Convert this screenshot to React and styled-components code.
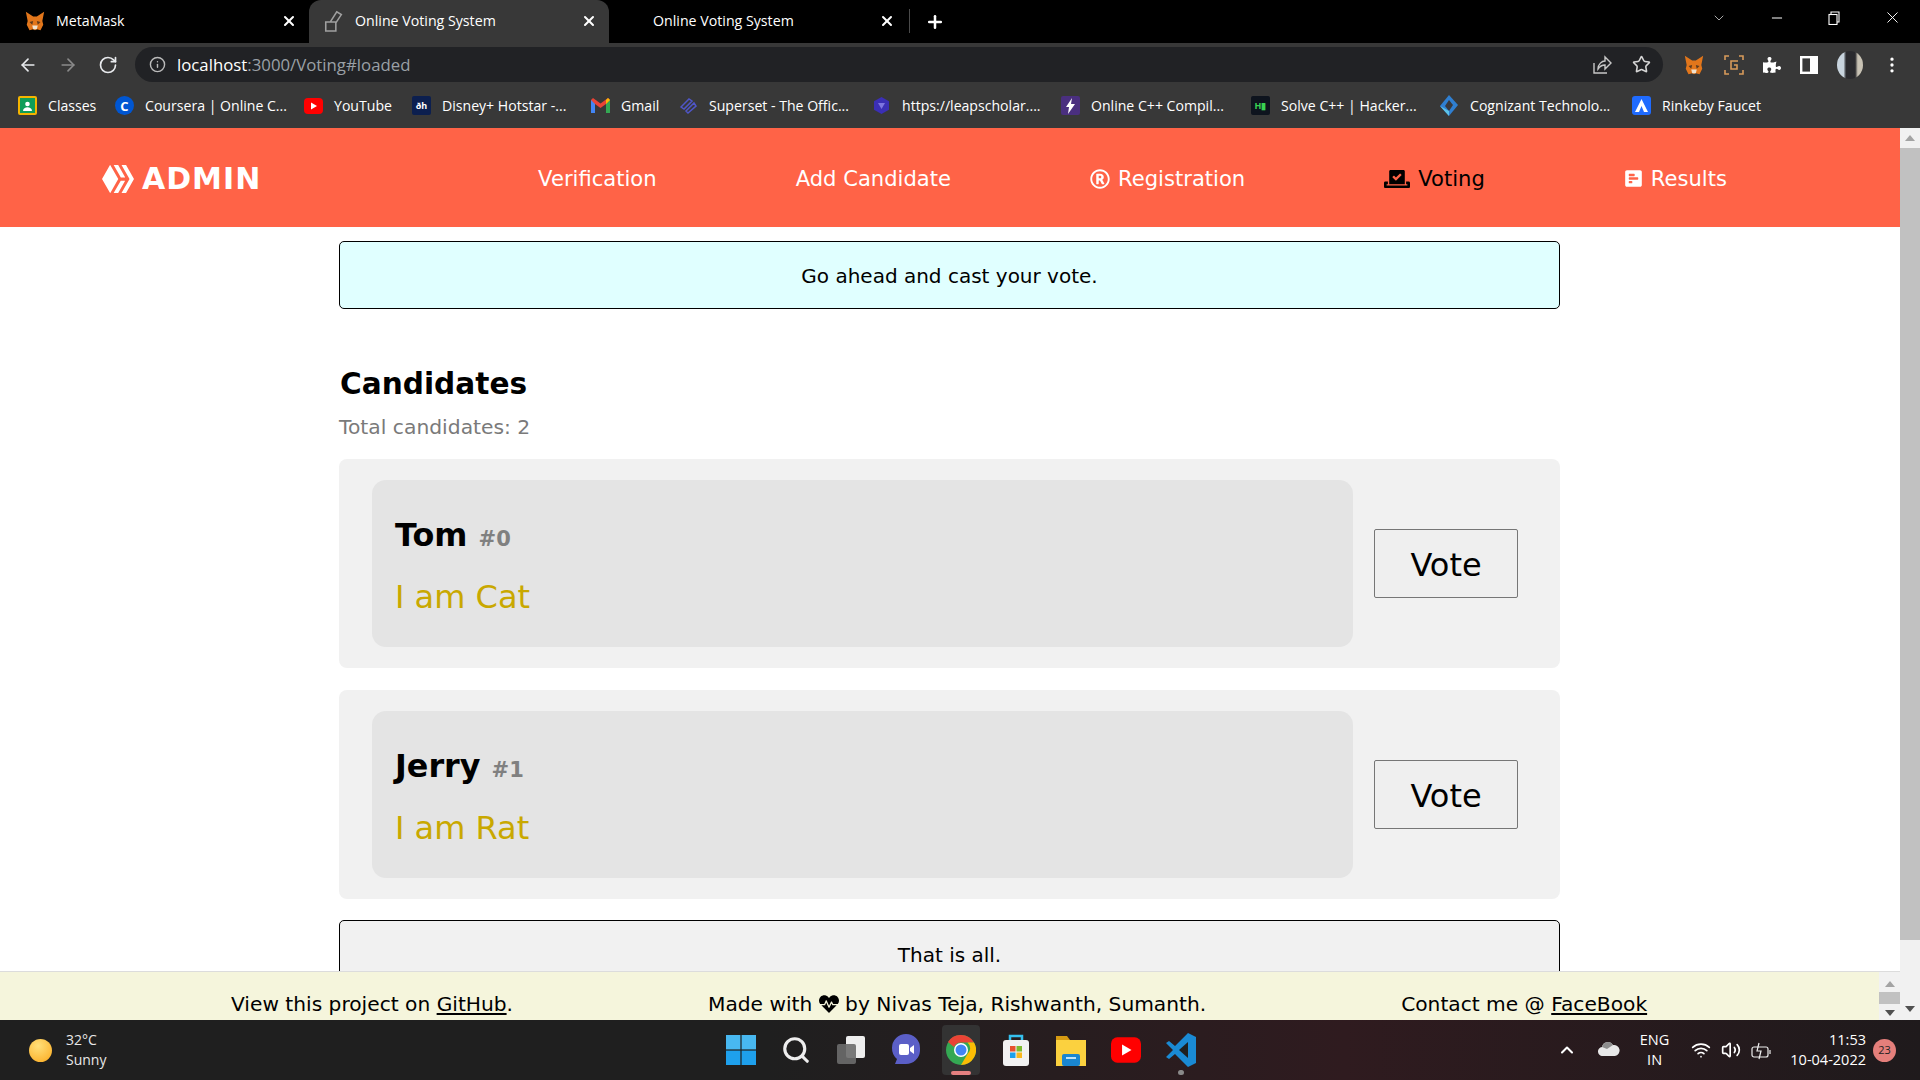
import React from "react"
import styled, { createGlobalStyle } from "styled-components"
import { FaHive, FaRegRegistered, FaVoteYea, FaPollH, FaHeartbeat, FaPuzzlePiece } from "react-icons/fa"
import { ArrowLeft, ArrowRight, RotateCw, Info, Star, X, Plus, Minus, ChevronDown, ChevronUp, EllipsisVertical, Wifi, Volume2, Search } from "lucide-react"

const UI_FONT = `"Open Sans", "Noto Sans", sans-serif`
const PAGE_FONT = `"DejaVu Sans", Verdana, sans-serif`

const GlobalStyle = createGlobalStyle`
  html, body { margin: 0; height: 100%; overflow: hidden; background: #fff; }
  #root { height: 100%; }
  * { box-sizing: border-box; }
`

const Screen = styled.div`
  display: flex;
  flex-direction: column;
  height: 1080px;
  width: 1920px;
  overflow: hidden;
`

/* browser chrome */
const TabStrip = styled.div`
  display: flex;
  height: 43px;
  background: #000;
  color: #fff;
  font: 14.2px ${UI_FONT};
`
const Tab = styled.div`
  display: flex;
  align-items: center;
  gap: ${(p) => (p.$noIcon ? "0" : "10px")};
  width: ${(p) => p.$w}px;
  padding: 0 12px 2px ${(p) => p.$pad}px;
  background: ${(p) => (p.$active ? "#383838" : "transparent")};
  border-radius: ${(p) => (p.$active ? "12px 12px 0 0" : "0")};
`
const TabTitle = styled.span`
  flex: 1;
  white-space: nowrap;
`
const TabDivider = styled.div`
  width: 1px;
  height: 24px;
  margin: 9px 15px 0 2px;
  background: #4a4a4a;
`
const NewTab = styled.div`
  display: flex;
  align-items: center;
`
const WindowControls = styled.div`
  display: flex;
  align-items: center;
  gap: 42px;
  margin-left: auto;
  padding: 0 18px 8px 0;
`
const Toolbar = styled.div`
  display: flex;
  align-items: center;
  height: 42px;
  padding: 1px 18px 0 18px;
  background: #383838;
  color: #e8eaed;
`
const NavButtons = styled.div`
  display: flex;
  gap: 20px;
  width: 117px;
`
const Omnibox = styled.div`
  display: flex;
  align-items: center;
  flex: 1;
  height: 35px;
  padding: 0 12px 0 14px;
  border-radius: 18px;
  background: #212225;
  font: 16.8px ${UI_FONT};
`
const Url = styled.span`
  margin-left: 11px;
  flex: 1;
  color: #fff;
  span { color: #9aa0a6; }
`
const OmniActions = styled.div`
  display: flex;
  align-items: center;
  gap: 20px;
  color: #d6d6d6;
`
const Extensions = styled.div`
  display: flex;
  align-items: center;
  gap: 19px;
  margin-left: 20px;
`
const Avatar = styled.div`
  width: 26px;
  height: 28px;
  border-radius: 50%;
  background: linear-gradient(90deg, #c8d4de 0 25%, #2a2a2e 35% 70%, #c8c2b4 80%);
`
const BookmarkBar = styled.div`
  display: flex;
  align-items: center;
  height: 43px;
  padding: 0 0 2px 18px;
  background: #383838;
  color: #fff;
  font: 14.1px ${UI_FONT};
`
const Bookmark = styled.div`
  display: flex;
  align-items: center;
  gap: 11px;
  width: ${(p) => p.$w}px;
  white-space: nowrap;
`
const FaviconBox = styled.div`
  display: flex;
  align-items: center;
  justify-content: center;
  width: 19px;
  height: 19px;
  border-radius: ${(p) => p.$r || 2}px;
  background: ${(p) => p.$bg || "transparent"};
  color: ${(p) => p.$fg || "#fff"};
  font: 700 ${(p) => p.$size || 9}px ${UI_FONT};
`

/* page */
const Viewport = styled.div`
  display: flex;
  flex: 1;
  min-height: 0;
`
const PageColumn = styled.div`
  display: flex;
  flex-direction: column;
  flex: 1;
  min-width: 0;
`
const Navbar = styled.nav`
  display: flex;
  align-items: center;
  flex-shrink: 0;
  height: 99px;
  padding: 2px 173px 0 102px;
  background: #ff6347;
  color: #fff;
  font: 21.1px ${PAGE_FONT};
`
const Brand = styled.div`
  display: flex;
  align-items: center;
  gap: 8px;
  font: 700 30px ${PAGE_FONT};
  letter-spacing: 1px;
`
const NavList = styled.div`
  display: flex;
  gap: 139px;
  margin-left: auto;
`
const NavItem = styled.div`
  display: flex;
  align-items: center;
  gap: 8px;
  color: ${(p) => (p.$active ? "#000" : "#fff")};
`
const Main = styled.main`
  flex: 1;
  min-height: 0;
  overflow: hidden;
  padding-right: 1px;
`
const Container = styled.div`
  width: 1221px;
  margin: 0 auto;
  padding-top: 14px;
  font-family: ${PAGE_FONT};
`
const Attention = styled.div`
  height: 68px;
  margin-top: ${(p) => (p.$end ? "-1px" : "0")};
  padding-top: 22px;
  border: 1px solid #000;
  border-radius: 5px;
  background: ${(p) => (p.$end ? "#f1f1f1" : "#e0ffff")};
  text-align: center;
  font-size: 20px;
  line-height: 24px;
`
const Heading = styled.h2`
  margin: 57px 0 0 1px;
  font-size: 29.6px;
  line-height: 36px;
  font-weight: 700;
`
const Total = styled.div`
  margin: 13px 0 20px;
  color: #7a7a7a;
  font-size: 20.3px;
  line-height: 24px;
`
const Card = styled.div`
  display: flex;
  align-items: center;
  height: 209px;
  margin-bottom: 22px;
  padding-left: 33px;
  border-radius: 8px;
  background: #f1f1f1;
`
const CardInfo = styled.div`
  width: 981px;
  height: 167px;
  padding: 33px 23px 0;
  border-radius: 14px;
  background: #e4e4e4;
`
const Name = styled.h3`
  margin: 0;
  font-size: 31.8px;
  line-height: 44px;
  font-weight: 700;
`
const CandidateId = styled.small`
  color: #808080;
  font-size: 21px;
`
const Slogan = styled.div`
  margin-top: 16px;
  color: #c9a800;
  font-size: 32px;
  line-height: 40px;
`
const VoteButton = styled.button`
  width: 144px;
  height: 69px;
  margin-left: 21px;
  padding-top: 3px;
  border: 1px solid #767676;
  border-radius: 2px;
  background: #efefef;
  color: #000;
  font: 32px ${PAGE_FONT};
`
const Footer = styled.footer`
  display: flex;
  align-items: flex-end;
  gap: 195px;
  flex-shrink: 0;
  height: 49px;
  padding: 0 0 3px 231px;
  border-top: 1px solid #dcdcdc;
  background: #f5f5dc;
  color: #000;
  font: 20.2px/26px ${PAGE_FONT};
  position: relative;
  a { color: inherit; }
`
const FooterBar = styled.div`
  position: absolute;
  top: 0;
  right: 0;
  bottom: 0;
  width: 21px;
  display: flex;
  flex-direction: column;
  align-items: center;
  background: #f1f1f1;
`
const ScrollTrack = styled.div`
  display: flex;
  flex-direction: column;
  align-items: center;
  flex-shrink: 0;
  width: 20px;
  padding-top: 7px;
  background: #f1f1f1;
`
const Arrow = styled.div`
  width: 0;
  height: 0;
  margin: ${(p) => p.$m};
  border-left: 5px solid transparent;
  border-right: 5px solid transparent;
  ${(p) => (p.$down ? "border-top: 6px solid #505050;" : "border-bottom: 6px solid #a3a3a3;")}
`
const Thumb = styled.div`
  width: 100%;
  height: ${(p) => p.$h}px;
  background: #c1c1c1;
`

/* taskbar */
const Taskbar = styled.div`
  display: flex;
  align-items: center;
  flex-shrink: 0;
  height: 60px;
  background: linear-gradient(90deg, #1f1f1f 0%, #1f1f1f 40%, #2f1b1f 70%, #1f1a1c 100%);
  color: #fff;
  font: 14.5px/20px ${UI_FONT};
`
const Weather = styled.div`
  display: flex;
  align-items: center;
  gap: 14px;
  width: 722px;
  padding-left: 29px;
  color: #e8e8e8;
  font-size: 14px;
`
const Sun = styled.div`
  width: 23px;
  height: 23px;
  border-radius: 50%;
  background: radial-gradient(circle at 40% 30%, #ffe07a, #fba91d);
`
const Dock = styled.div`
  display: flex;
  align-items: center;
  gap: 17px;
`
const DockItem = styled.div`
  position: relative;
  display: flex;
  align-items: center;
  justify-content: center;
  width: 38px;
  height: 50px;
  border-radius: 4px;
  background: ${(p) => (p.$open ? "#333" : "transparent")};
`
const DockMark = styled.span`
  position: absolute;
  bottom: 0;
  width: ${(p) => (p.$active ? "20px" : "6px")};
  height: ${(p) => (p.$active ? "4px" : "5px")};
  border-radius: 3px;
  background: ${(p) => (p.$active ? "#e58080" : "#8a8a8a")};
`
const Tray = styled.div`
  display: flex;
  align-items: center;
  margin-left: auto;
  padding-right: 24px;
`
const TrayText = styled.div`
  margin: ${(p) => p.$m};
  text-align: ${(p) => p.$align || "center"};
`
const Badge = styled.div`
  display: flex;
  align-items: center;
  justify-content: center;
  width: 23px;
  height: 23px;
  margin-left: 7px;
  border-radius: 50%;
  background: #e57f7b;
  color: #222;
  font-size: 11px;
`

const Fox = ({ size = 22 }) => (
  <svg width={size} height={size} viewBox="0 0 24 24">
    <path d="M2 2l8 5h4l8-5-2 10 1 4-3 6-4-1-2 1-2-1-4 1-3-6 1-4z" fill="#e2761b" />
    <path d="M6 13l4-1-1 4zM18 13l-4-1 1 4z" fill="#5c3a1e" />
    <path d="M9 17h6l-1 4h-4z" fill="#f1e3d0" />
  </svg>
)
const Booth = () => (
  <svg width="22" height="24" viewBox="0 0 24 26" fill="none" stroke="#a0a0a0" strokeWidth="1.700">
    <path d="M3 14h11v10H3zM8 14l7-11 5 3-6 9" />
  </svg>
)
const ClassesIcon = () => (
  <FaviconBox $bg="#f4b400" $fg="#fff">
    <svg width="15" height="15" viewBox="0 0 15 15"><rect width="15" height="15" fill="#0f9d58" /><circle cx="7.5" cy="6" r="2.3" fill="#fff" /><path d="M3 13c0-5 9-5 9 0z" fill="#fff" /></svg>
  </FaviconBox>
)
const PlayIcon = ({ w = 19, h = 16 }) => (
  <svg width={w} height={h} viewBox="0 0 19 16">
    <rect width="19" height="16" rx="4" fill="#f00" />
    <path d="M7 4.500l6 3.500-6 3.500z" fill="#fff" />
  </svg>
)
const GmailIcon = () => (
  <svg width="19" height="15" viewBox="0 0 19 15">
    <path d="M0 2v13h4V6l5.500 4L15 6v9h4V2l-2-2-7.500 5.500L2 0z" fill="#ea4335" />
    <path d="M0 2v13h4V6z" fill="#4285f4" />
    <path d="M15 6v9h4V2z" fill="#34a853" />
    <path d="M17 0l2 2-4 4V2z" fill="#fbbc04" />
  </svg>
)
const SupersetIcon = () => (
  <svg width="19" height="19" viewBox="0 0 19 19" fill="none" stroke="#4f56c8" strokeWidth="1.500">
    <path d="M2 11l8-8 3 2-8 8zM7 15l8-8 2 3-8 7z" />
  </svg>
)
const HexIcon = () => (
  <svg width="19" height="19" viewBox="0 0 19 19">
    <path d="M9.500 1l7.500 4.200v8.600L9.500 18 2 13.800V5.200z" fill="#3b2fb5" />
    <path d="M6 7h7l-3.500 6z" fill="#7d75e0" />
  </svg>
)
const BoltIcon = () => (
  <FaviconBox $bg="#4a2f7f">
    <svg width="11" height="16" viewBox="0 0 11 16"><path d="M7 0L1 9h3l-1 7 7-10H6z" fill="#fff" /></svg>
  </FaviconBox>
)
const CognizantIcon = () => (
  <svg width="19" height="21" viewBox="0 0 19 21">
    <path d="M9 0l9 10-9 11-9-10z" fill="#2f7fd1" />
    <path d="M9 5l4 5-4 6-4-5z" fill="#38383c" />
    <path d="M0 11l9 10v-5z" fill="#5cc3e8" />
  </svg>
)
const RinkebyIcon = () => (
  <FaviconBox $bg="#1f6bff" $r={3}>
    <svg width="13" height="13" viewBox="0 0 13 13"><path d="M6.500 0L13 13H9L6.500 7 4 13H0z" fill="#fff" /></svg>
  </FaviconBox>
)
const WinLogo = () => (
  <svg width="30" height="30" viewBox="0 0 30 30">
    <rect width="14.400" height="14.400" fill="#48b8f0" />
    <rect x="15.600" width="14.400" height="14.400" fill="#48b8f0" />
    <rect y="15.600" width="14.400" height="14.400" fill="#1ea0ec" />
    <rect x="15.600" y="15.600" width="14.400" height="14.400" fill="#1ea0ec" />
  </svg>
)
const TaskView = () => (
  <svg width="32" height="32" viewBox="0 0 32 32">
    <rect x="11" y="2" width="19" height="22" rx="2" fill="#eee" />
    <rect x="2" y="10" width="19" height="20" rx="2" fill="#6b6b6b" opacity=".9" />
  </svg>
)
const MeetIcon = () => (
  <svg width="30" height="34" viewBox="0 0 30 34">
    <path d="M15 1a14 14 0 0 1 14 14v3a14 14 0 0 1-14 13H4l2-5a14 14 0 0 1-5-11A14 14 0 0 1 15 1z" fill="#5b5fc7" />
    <rect x="8" y="11" width="10" height="11" rx="2" fill="#fff" />
    <path d="M19 15l4-3v9l-4-3z" fill="#fff" />
  </svg>
)
const ChromeIcon = () => (
  <svg width="30" height="30" viewBox="0 0 30 30">
    <circle cx="15" cy="15" r="15" fill="#34a853" />
    <path d="M15 0a15 15 0 0 1 13 7.500H15a7.500 7.500 0 0 0-7 4.500L2 7a15 15 0 0 1 13-7z" fill="#ea4335" />
    <path d="M28 7.500A15 15 0 0 1 15 30l6.500-11a7.500 7.500 0 0 0 0-11.500z" fill="#fbbc04" />
    <circle cx="15" cy="15" r="7" fill="#fff" />
    <circle cx="15" cy="15" r="5.500" fill="#4285f4" />
  </svg>
)
const StoreIcon = () => (
  <svg width="30" height="34" viewBox="0 0 30 34">
    <path d="M9 8V3h12v5" fill="none" stroke="#35c0ee" strokeWidth="2.500" />
    <rect x="2" y="7" width="26" height="26" rx="3" fill="#f2f2f2" />
    <rect x="9" y="13" width="5.500" height="5.500" fill="#e8512f" />
    <rect x="15.500" y="13" width="5.500" height="5.500" fill="#7dba2f" />
    <rect x="9" y="19.500" width="5.500" height="5.500" fill="#1ea0ec" />
    <rect x="15.500" y="19.500" width="5.500" height="5.500" fill="#fab81e" />
  </svg>
)
const FolderIcon = () => (
  <svg width="30" height="32" viewBox="0 0 30 32">
    <path d="M0 2h11l3 4h16v26H0z" fill="#d69a12" />
    <rect y="6" width="30" height="26" fill="#fbd13f" />
    <rect x="6" y="20" width="18" height="12" rx="2" fill="#1a86d0" />
    <rect x="10" y="23" width="10" height="2" fill="#bfe3f8" />
  </svg>
)
const VsCodeIcon = () => (
  <svg width="32" height="34" viewBox="0 0 32 34">
    <path d="M23 0l8 4v26l-8 4-13-13-6 5-3-2 7-7-7-7 3-2 6 5z" fill="#1a8ad4" />
    <path d="M23 9l-9 8 9 8z" fill="#1f1f1f" />
  </svg>
)
const ShareIcon = () => (
  <svg width="20" height="20" viewBox="0 0 20 20" fill="none" stroke="#c8c8c8" strokeWidth="1.400">
    <path d="M2 8v10h13M6 14c0-5 4-8 7-8V2l6 6-6 6v-4c-3 0-5 1-7 4z" />
  </svg>
)
const LoomExt = () => (
  <svg width="20" height="20" viewBox="0 0 20 20" fill="none" stroke="#d79a5a" strokeWidth="1.600">
    <path d="M1 5V1h4M15 1h4v4M19 15v4h-4M5 19H1v-4" />
    <path d="M14 6H7v8h6v-4h-3" />
  </svg>
)
const SidePanel = () => (
  <svg width="18" height="18" viewBox="0 0 18 18">
    <rect x="1.200" y="1.200" width="15.600" height="15.600" fill="none" stroke="#fff" strokeWidth="2.400" />
    <rect x="10" y="1" width="7" height="16" fill="#fff" />
  </svg>
)
const RestoreIcon = () => (
  <svg width="14" height="14" viewBox="0 0 14 14" fill="none" stroke="#fff" strokeWidth="1.100">
    <rect x="2" y="3.500" width="8" height="10" />
    <path d="M4 3.500V1h8v10h-2" />
  </svg>
)
const CloudIcon = () => (
  <svg width="22" height="16" viewBox="0 0 22 16">
    <path d="M5 16a4.500 4.500 0 0 1-1-9 6 6 0 0 1 11-2 5.500 5.500 0 0 1 2 11z" fill="#e8e8e8" />
    <path d="M4 7a6 6 0 0 1 11-2l-6 4z" fill="#8d8d8d" />
  </svg>
)
const BatteryIcon = () => (
  <svg width="20" height="18" viewBox="0 0 20 18" fill="none" stroke="#eee" strokeWidth="1.200">
    <rect x="1" y="5" width="16" height="10" rx="2" />
    <path d="M19 8v4M8 1L6 9h4l-2 8" />
  </svg>
)

const BOOKMARKS = [
  { label: "Classes", w: 97, icon: <ClassesIcon /> },
  { label: "Coursera | Online C...", w: 189, icon: <FaviconBox $bg="#0056d2" $r={10} $size={13}>C</FaviconBox> },
  { label: "YouTube", w: 108, icon: <PlayIcon /> },
  { label: "Disney+ Hotstar -...", w: 179, icon: <FaviconBox $bg="#0c1f4f">ðh</FaviconBox> },
  { label: "Gmail", w: 88, icon: <GmailIcon /> },
  { label: "Superset - The Offic...", w: 193, icon: <SupersetIcon /> },
  { label: "https://leapscholar....", w: 189, icon: <HexIcon /> },
  { label: "Online C++ Compil...", w: 190, icon: <BoltIcon /> },
  { label: "Solve C++ | Hacker...", w: 189, icon: <FaviconBox $bg="#0e141e" $fg="#39d353">H▮</FaviconBox> },
  { label: "Cognizant Technolo...", w: 192, icon: <CognizantIcon /> },
  { label: "Rinkeby Faucet", w: 160, icon: <RinkebyIcon /> },
]

const CANDIDATES = [
  { id: 0, name: "Tom", slogan: "I am Cat" },
  { id: 1, name: "Jerry", slogan: "I am Rat" },
]

export default function App() {
  return (
    <Screen>
      <GlobalStyle />
      <TabStrip>
        <Tab $w={309} $pad={24}><Fox /><TabTitle>MetaMask</TabTitle><X size={16} strokeWidth={3} /></Tab>
        <Tab $w={300} $pad={14} $active><Booth /><TabTitle>Online Voting System</TabTitle><X size={16} strokeWidth={3} /></Tab>
        <Tab $w={298} $pad={44} $noIcon><TabTitle>Online Voting System</TabTitle><X size={16} strokeWidth={3} /></Tab>
        <TabDivider />
        <NewTab><Plus size={20} strokeWidth={3} /></NewTab>
        <WindowControls>
          <ChevronDown size={16} strokeWidth={1} />
          <Minus size={16} strokeWidth={1.500} />
          <RestoreIcon />
          <X size={19} strokeWidth={1.200} />
        </WindowControls>
      </TabStrip>
      <Toolbar>
        <NavButtons>
          <ArrowLeft size={20} />
          <ArrowRight size={20} color="#8a8a8a" />
          <RotateCw size={20} />
        </NavButtons>
        <Omnibox>
          <Info size={17} color="#bbb" />
          <Url>localhost<span>:3000/Voting#loaded</span></Url>
          <OmniActions>
            <ShareIcon />
            <Star size={19} />
          </OmniActions>
        </Omnibox>
        <Extensions>
          <Fox />
          <LoomExt />
          <FaPuzzlePiece size={18} color="#fff" />
          <SidePanel />
          <Avatar />
          <EllipsisVertical size={20} color="#fff" />
        </Extensions>
      </Toolbar>
      <BookmarkBar>
        {BOOKMARKS.map((b) => (
          <Bookmark key={b.label} $w={b.w}>{b.icon}{b.label}</Bookmark>
        ))}
      </BookmarkBar>

      <Viewport>
        <PageColumn>
          <Navbar>
            <Brand><FaHive size={32} />ADMIN</Brand>
            <NavList>
              <NavItem>Verification</NavItem>
              <NavItem>Add Candidate</NavItem>
              <NavItem><FaRegRegistered size={20} />Registration</NavItem>
              <NavItem $active><FaVoteYea size={26} />Voting</NavItem>
              <NavItem><FaPollH size={19} />Results</NavItem>
            </NavList>
          </Navbar>
          <Main>
            <Container>
              <Attention>Go ahead and cast your vote.</Attention>
              <Heading>Candidates</Heading>
              <Total>Total candidates: 2</Total>
              {CANDIDATES.map((c) => (
                <Card key={c.id}>
                  <CardInfo>
                    <Name>{c.name} <CandidateId>#{c.id}</CandidateId></Name>
                    <Slogan>{c.slogan}</Slogan>
                  </CardInfo>
                  <VoteButton>Vote</VoteButton>
                </Card>
              ))}
              <Attention $end>That is all.</Attention>
            </Container>
          </Main>
          <Footer>
            <span>View this project on <a href="#github">GitHub</a>.</span>
            <span>Made with <FaHeartbeat size={20} style={{ verticalAlign: -3 }} /> by Nivas Teja, Rishwanth, Sumanth.</span>
            <span>Contact me @ <a href="#facebook">FaceBook</a></span>
            <FooterBar>
              <Arrow $m="9px 0 5px" />
              <Thumb $h={12} />
              <Arrow $m="6px 0 0" $down />
            </FooterBar>
          </Footer>
        </PageColumn>
        <ScrollTrack>
          <Arrow $m="0 0 7px" />
          <Thumb $h={792} />
          <Arrow $m="66px 0 0" $down />
        </ScrollTrack>
      </Viewport>

      <Taskbar>
        <Weather>
          <Sun />
          <div>32°C<br />Sunny</div>
        </Weather>
        <Dock>
          <DockItem><WinLogo /></DockItem>
          <DockItem><Search size={30} strokeWidth={2.500} color="#eee" /></DockItem>
          <DockItem><TaskView /></DockItem>
          <DockItem><MeetIcon /></DockItem>
          <DockItem $open><ChromeIcon /><DockMark $active /></DockItem>
          <DockItem><StoreIcon /></DockItem>
          <DockItem><FolderIcon /></DockItem>
          <DockItem><PlayIcon w={30} h={26} /></DockItem>
          <DockItem><VsCodeIcon /><DockMark /></DockItem>
        </Dock>
        <Tray>
          <ChevronUp size={20} strokeWidth={2.500} />
          <TrayText $m="0 0 0 21px"><CloudIcon /></TrayText>
          <TrayText $m="0 22px 0 20px">ENG<br />IN</TrayText>
          <Wifi size={20} />
          <Volume2 size={20} style={{ marginLeft: 10 }} />
          <TrayText $m="0 0 -6px 10px"><BatteryIcon /></TrayText>
          <TrayText $m="0 0 0 19px" $align="right">11:53<br />10-04-2022</TrayText>
          <Badge>23</Badge>
        </Tray>
      </Taskbar>
    </Screen>
  )
}
